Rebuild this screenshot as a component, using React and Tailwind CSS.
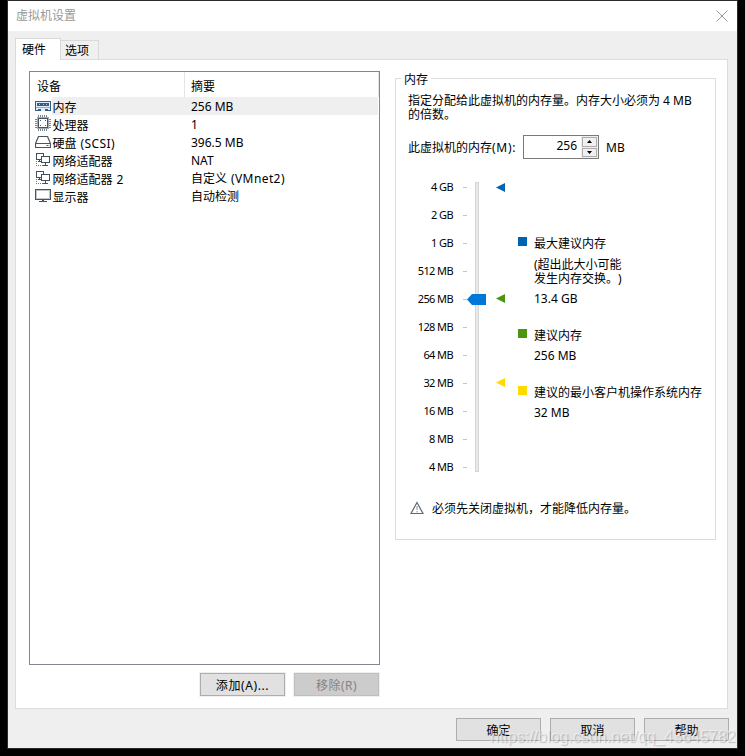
import React, { useState } from 'react';

const MemoryIcon = () => (
  <svg width="16" height="16" viewBox="0 0 16 16" fill="none" shapeRendering="crispEdges">
    <path d="M0.5 4.5h15v9h-15z" fill="#e3edf5" stroke="#2f5f87" />
    <path d="M2 6h12v3H2z" fill="#2f5f87" />
    <path d="M4 7h1v1H4zM8 7h1v1H8zM11 7h1v1h-1z" fill="#a9c3d8" />
    <path d="M1 10.5h14" stroke="#8fb0ca" />
    <path d="M3 12h3v1H3zM10 12h3v1h-3z" fill="#2f5f87" />
    <path d="M6 13h4v1H6z" fill="#e3edf5" />
  </svg>
);

const CpuIcon = () => (
  <svg width="16" height="16" viewBox="0 0 16 16" fill="none" shapeRendering="crispEdges">
    <path d="M2 2h12v12H2z" fill="#a3abb2" />
    <path d="M3.5 3.5h9v9h-9z" fill="#fff" stroke="#4a5560" />
    <path d="M3.5 0v2M5.5 0v2M7.5 0v2M9.5 0v2M11.5 0v2M3.5 14v2M5.5 14v2M7.5 14v2M9.5 14v2M11.5 14v2M0 4.5h2M0 6.5h2M0 8.5h2M0 10.5h2M0 12.5h2M14 4.5h2M14 6.5h2M14 8.5h2M14 10.5h2M14 12.5h2" stroke="#7a848d" />
    <path d="M5 5h1v1H5zM10 10h1v1h-1zM5 10h1v1H5zM10 5h1v1h-1z" fill="#4a5560" />
  </svg>
);

const DiskIcon = () => (
  <svg width="16" height="16" viewBox="0 0 16 16" fill="none">
    <path d="M3.5 3.5h9l3 7v4H.5v-4zM.5 10.5h15" stroke="#49545e" strokeWidth="1.2" strokeLinejoin="round" />
    <path d="M11.5 12.5h2" stroke="#49545e" />
  </svg>
);

const NetworkIcon = () => (
  <svg width="16" height="16" viewBox="0 0 16 16" fill="none" shapeRendering="crispEdges">
    <path d="M1.5 2.5h7v6h-7zM3 10.5h3M4.5 9v1" fill="#fff" stroke="#40505f" />
    <path d="M6.5 5.5h8v6h-8z" fill="#fff" stroke="#40505f" />
    <path d="M10.5 12v2M8 14.5h5" stroke="#40505f" />
    <path d="M1.5 10v4.5H8" stroke="#6c7883" strokeDasharray="1 1" />
  </svg>
);

const DisplayIcon = () => (
  <svg width="16" height="16" viewBox="0 0 16 16" fill="none" shapeRendering="crispEdges">
    <path d="M1.5 3.5h13v8h-13z" stroke="#c3c8cc" />
    <path d="M0.5 2.5h15v10h-15z" stroke="#49545e" />
    <path d="M4 14.5h8M7 13.5h2" stroke="#49545e" />
  </svg>
);

const devices = [
  { name: '内存', summary: '256 MB', Icon: MemoryIcon },
  { name: '处理器', summary: '1', Icon: CpuIcon },
  { name: '硬盘', note: '(SCSI)', summary: '396.5 MB', Icon: DiskIcon },
  { name: '网络适配器', summary: 'NAT', Icon: NetworkIcon },
  { name: '网络适配器', note: '2', summary: '自定义', summaryNote: '(VMnet2)', Icon: NetworkIcon },
  { name: '显示器', summary: '自动检测', Icon: DisplayIcon },
];

const scale = ['4 GB', '2 GB', '1 GB', '512 MB', '256 MB', '128 MB', '64 MB', '32 MB', '16 MB', '8 MB', '4 MB'];

const Marker = ({ className }) => (
  <svg width="9" height="9" viewBox="0 0 9 9" className={`block ${className}`}>
    <path d="M0 4.5L9 0v9z" fill="currentColor" />
  </svg>
);

const Note = ({ children }) => <span className="ml-[4px] tracking-[0.4px]">{children}</span>;

const Button = ({ children, disabled, className = '' }) => (
  <button
    disabled={disabled}
    className={`box-border h-[23px] w-[85px] border pt-[3px] text-center leading-[18px] ${
      disabled ? 'border-[#bfbfbf] bg-[#cccccc] text-[#838383]' : 'border-[#adadad] bg-[#e1e1e1] text-black'
    } ${className}`}
  >
    {children}
  </button>
);

const DeviceList = () => {
  const [selected, setSelected] = useState(0);

  return (
    <div className="flex h-[594px] w-[351px] flex-col border border-[#828790] bg-white">
      <div className="flex h-[25px] leading-[30px]">
        <div className="w-[155px] border-r border-[#e5e5e5] pl-[7px]">设备</div>
        <div className="flex-1 border-r border-[#e5e5e5] pl-[6px]">摘要</div>
      </div>
      {devices.map(({ name, note, summary, summaryNote, Icon }, i) => (
        <div key={i} onClick={() => setSelected(i)} className="flex h-[18px] leading-[20px]">
          <div className="w-[22px] shrink-0 pl-[5px]">
            <Icon />
          </div>
          <div className={`mr-px flex flex-1 ${selected === i ? 'bg-[#efefef]' : ''}`}>
            <span className="w-[139px] pl-[0.6px] leading-[22px]">{name}{note && <Note>{note}</Note>}</span>
            <span>{summary}{summaryNote && <Note>{summaryNote}</Note>}</span>
          </div>
        </div>
      ))}
    </div>
  );
};

const MemorySlider = () => (
  <div className="flex">
    <div className="-mt-px w-[57px] text-right text-[11px] tracking-[-0.6px]">
      {scale.map((label) => (
        <div key={label} className="h-[28px] leading-[28px]">{label}</div>
      ))}
    </div>
    <div className="-mt-px ml-[10px] w-[4px]">
      {scale.map((label) => (
        <div key={label} className="flex h-[28px] items-center">
          <div className="h-px w-[4px] bg-[#c4c4c4]" />
        </div>
      ))}
    </div>
    <div className="relative mt-[8px] ml-[8px] h-[290px] w-[4px] border border-[#d6d6d6] bg-[#e7eaea]">
      <svg width="19" height="11" viewBox="0 0 19 11" className="absolute top-[111px] left-[-9px]">
        <path d="M0 5.5L5 0h14v11H5z" fill="#0078d7" />
      </svg>
    </div>
    <div className="ml-[17px] w-[9px] pt-[9px]">
      <Marker className="text-[#0063b1]" />
      <Marker className="mt-[102px] text-[#4b960f]" />
      <Marker className="mt-[75px] text-[#ffda00]" />
    </div>
    <div className="ml-[13px] pt-[60px] whitespace-nowrap">
      <div className="flex">
        <div className="mt-[3px] mr-[7px] size-[9px] bg-[#0063b1]" />
        <div>
          <p className="pt-px leading-[18px]">最大建议内存</p>
          <p className="mt-[5px] leading-[14px]">(超出此大小可能<br />发生内存交换。)</p>
          <p className="mt-[4px] leading-[18px]">13.4 GB</p>
        </div>
      </div>
      <div className="mt-[18px] flex">
        <div className="mt-[3px] mr-[7px] size-[9px] bg-[#4b960f]" />
        <div>
          <p className="pt-px leading-[18px]">建议内存</p>
          <p className="mt-[2px] leading-[18px]">256 MB</p>
        </div>
      </div>
      <div className="mt-[18px] flex">
        <div className="mt-[3px] mr-[7px] size-[9px] bg-[#ffda00]" />
        <div>
          <p className="pt-px leading-[18px]">建议的最小客户机操作系统内存</p>
          <p className="mt-[2px] leading-[18px]">32 MB</p>
        </div>
      </div>
    </div>
  </div>
);

const MemoryPanel = () => {
  const [memory, setMemory] = useState(256);

  return (
    <div className="relative h-[462px] w-[321px] border border-[#dcdcdc]">
      <span className="absolute top-[-8px] left-[5px] bg-white px-[3px] leading-[18px]">内存</span>
      <p className="pt-[15px] pl-[12px] leading-[14px]">
        指定分配给此虚拟机的内存量。内存大小必须为 4 MB<br />的倍数。
      </p>
      <div className="mt-[13px] flex h-[24px] items-center pl-[12px]">
        <span className="w-[115px] pt-[2px] whitespace-nowrap">此虚拟机的内存<span className="tracking-[0.7px]">(M):</span></span>
        <div className="flex h-[24px] w-[76px] border border-[#7a7a7a] bg-white">
          <span className="flex-1 pr-[4px] text-right leading-[20px]">{memory}</span>
          <div className="flex w-[17px] flex-col gap-px bg-[#efefef] p-px">
            <button onClick={() => setMemory(memory + 4)} className="flex flex-1 items-center justify-center border border-[#adadad] bg-[#f0f0f0]">
              <svg width="5" height="3" viewBox="0 0 5 3"><path d="M2.5 0L5 3H0z" /></svg>
            </button>
            <button onClick={() => setMemory(memory - 4)} className="flex flex-1 items-center justify-center border border-[#adadad] bg-[#f0f0f0]">
              <svg width="5" height="3" viewBox="0 0 5 3"><path d="M0 0h5L2.5 3z" /></svg>
            </button>
          </div>
        </div>
        <span className="ml-[7px] pt-[2px]">MB</span>
      </div>
      <div className="mt-[15px] h-[307px]">
        <MemorySlider />
      </div>
      <div className="mt-[17px] flex items-center pl-[14px] leading-[18px]">
        <svg width="14" height="14" viewBox="0 0 14 14" fill="none" className="mr-[8px]">
          <path d="M7 1.5L13 12.5H1z" stroke="#5d6c7a" strokeWidth="1.2" />
          <path d="M7 5v4M7 10v1.5" stroke="#8593a0" />
        </svg>
        <span className="pt-[2px]">必须先关闭虚拟机，才能降低内存量。</span>
      </div>
    </div>
  );
};

const App = () => (
  <div className="h-[756px] w-[745px] overflow-hidden bg-black pl-[7px] font-['Noto_Sans','Noto_Sans_CJK_SC',sans-serif] text-[12px] text-black [text-spacing-trim:space-all]">
    <div className="relative flex h-[749px] w-[731px] flex-col border border-[#2b2b2b] bg-[#efefef]">
      <div className="flex h-[30px] items-center justify-between bg-white pr-[9px] pl-[8px] text-[#999]">
        <span>虚拟机设置</span>
        <svg width="12" height="12" viewBox="0 0 12 12" stroke="#999" fill="none" className="-mt-px">
          <path d="M.5.5l11 11M11.5.5l-11 11" />
        </svg>
      </div>

      <div className="flex h-[28px] items-end pl-[7px]">
        <div className="z-10 -mb-px h-[22px] w-[46px] border border-b-0 border-[#d9d9d9] bg-white pl-[6px] leading-[22px]">硬件</div>
        <div className="h-[19px] w-[38px] border border-b-0 border-l-0 border-[#d9d9d9] bg-[#f0f0f0] pl-[4px] leading-[20px]">选项</div>
      </div>
      <div className="ml-[7px] flex h-[650px] w-[713px] border border-[#dcdcdc] bg-white pt-[11px] pl-[13px]">
        <div>
          <DeviceList />
          <div className="mt-[8px] flex justify-end gap-[9px] pr-px">
            <Button className="outline outline-[#efefef]"><span className="tracking-[0.6px]">添加(A)...</span></Button>
            <Button disabled className="outline outline-[#efefef]"><span className="tracking-[0.5px]">移除(R)</span></Button>
          </div>
        </div>
        <div className="mt-[7px] ml-[15px]">
          <MemoryPanel />
        </div>
      </div>

      <div className="mt-[9px] flex justify-end gap-[9px] pr-[8px]">
        <Button>确定</Button>
        <Button>取消</Button>
        <Button>帮助</Button>
      </div>

      <span className="pointer-events-none absolute top-[726px] left-[482px] font-['Liberation_Sans',sans-serif] text-[16px] leading-[20px] whitespace-nowrap text-white/50 [text-shadow:1px_1px_1px_rgba(0,0,0,0.2)]">
        https://blog.csdn.net/qq_43645782
      </span>
    </div>
  </div>
);

export default App;
